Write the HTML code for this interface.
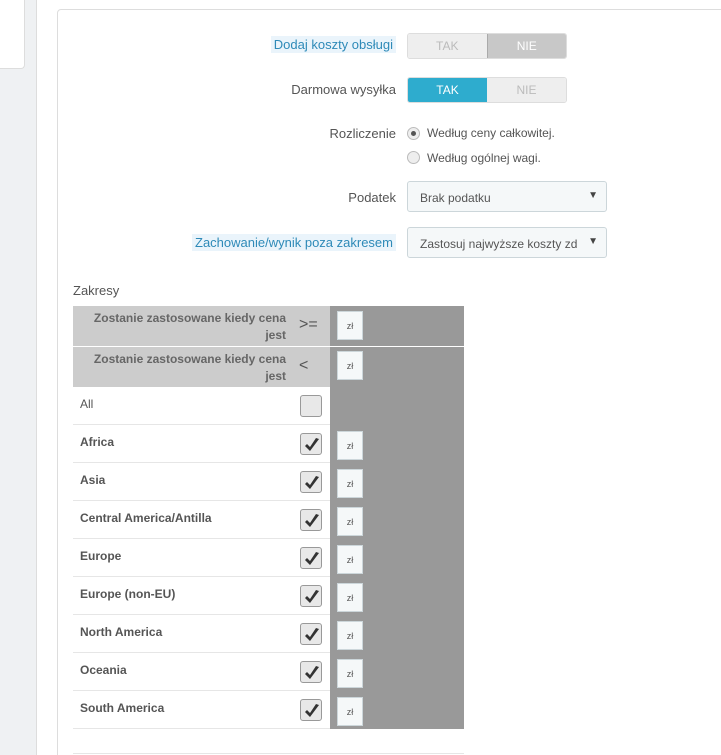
<!DOCTYPE html>
<html><head><meta charset="utf-8"><style>
*{box-sizing:border-box;margin:0;padding:0}
html,body{width:721px;height:755px;overflow:hidden}
body{background:#eff1f3;font-family:"Liberation Sans",sans-serif;font-size:12px;color:#555;position:relative}
.abs{position:absolute}
.lbl{position:absolute;right:325px;font-size:13px;color:#555;white-space:nowrap}
.hl{background:#eaf4fb;color:#2e8ab8;padding:1px 3px}
.sw{position:absolute;left:407px;width:160px;height:26px;border:1px solid #ddd;border-radius:3px;display:flex;font-size:12px;overflow:hidden}
.sw div{flex:1;display:flex;align-items:center;justify-content:center}
.sel{position:absolute;left:407px;width:200px;height:31px;border:1px solid #ccd6da;border-radius:3px;background:#f5f8f9;font-size:12px;color:#555;padding:9px 12px;white-space:nowrap;overflow:hidden}
.sel:after{content:"▼";position:absolute;right:8px;top:8px;font-size:10px;color:#444}
.radio{position:absolute;left:407px;width:13px;height:13px;border:1px solid #bbb;border-radius:50%;background:#eee}
.row{position:absolute;left:73px;width:391px;height:38px;border-bottom:1px solid #e6e6e6;background:#fff}
.row .n{position:absolute;left:7px;top:10px;font-weight:bold;font-size:12px;color:#555}
.row .r{position:absolute;left:257px;top:0;width:134px;height:38px;background:#999}
.cb{position:absolute;left:227px;top:8px;width:22px;height:22px;border:1px solid #999;border-radius:3px;background:#e8e8e8}
.cb svg{position:absolute;left:2px;top:2px}
.zl{position:absolute;left:7px;top:6px;width:26px;height:29px;background:#f5f8f9;border:1px solid #ccd6da;font-size:9px;display:flex;align-items:center;justify-content:center;color:#555}
.hdr{position:absolute;left:73px;width:391px;height:40px;background:#ccc}
.hdr .t{position:absolute;left:10px;top:4px;width:203px;text-align:right;font-weight:bold;font-size:12px;line-height:17px;color:#666}
.hdr .op{position:absolute;left:226px;top:10px;font-size:16px;color:#555}
.hdr .r{position:absolute;left:257px;top:0;width:134px;height:40px;background:#999}
</style></head><body>
<div class="abs" style="left:0;top:0;width:25px;height:69px;background:#fff;border:1px solid #ddd;border-left:none;border-top:none;border-radius:0 0 4px 0"></div>
<div class="abs" style="left:36px;top:0;width:685px;height:755px;background:#fff;border-left:1px solid #ddd"></div>
<div class="abs" style="left:57px;top:9px;width:680px;height:760px;background:#fff;border:1px solid #ddd;border-radius:4px"></div>

<div class="lbl" style="top:37px"><span class="hl">Dodaj koszty obsługi</span></div>
<div class="sw" style="top:33px"><div style="background:#eee;color:#bbb">TAK</div><div style="background:#c8c8c8;color:#fff;border-left:1px solid #aaa">NIE</div></div>

<div class="lbl" style="top:82px">Darmowa wysyłka</div>
<div class="sw" style="top:77px"><div style="background:#2eacce;color:#fff">TAK</div><div style="background:#eee;color:#bbb">NIE</div></div>

<div class="lbl" style="top:126px">Rozliczenie</div>
<div class="radio" style="top:127px"><div style="width:5px;height:5px;border-radius:50%;background:#555;margin:3px"></div></div>
<div class="abs" style="left:427px;top:126px;font-size:12px">Według ceny całkowitej.</div>
<div class="radio" style="top:151px"></div>
<div class="abs" style="left:427px;top:151px;font-size:12px">Według ogólnej wagi.</div>

<div class="lbl" style="top:190px">Podatek</div>
<div class="sel" style="top:181px">Brak podatku</div>

<div class="lbl" style="top:235px"><span class="hl">Zachowanie/wynik poza zakresem</span></div>
<div class="sel" style="top:227px;padding-right:30px">Zastosuj najwyższe koszty zd</div>

<div class="abs" style="left:73px;top:283px;font-size:13px;color:#555">Zakresy</div>

<div class="hdr" style="top:306px"><div class="t">Zostanie zastosowane kiedy cena jest</div><div class="op">&gt;=</div><div class="r"><div class="zl" style="top:5px">zł</div></div></div>
<div class="hdr" style="top:347px"><div class="t">Zostanie zastosowane kiedy cena jest</div><div class="op">&lt;</div><div class="r"><div class="zl" style="top:4px">zł</div></div></div>

<div class="row" style="top:387px"><div class="n" style="font-weight:normal">All</div><div class="cb"></div><div class="r"></div></div>
<div class="row" style="top:425px"><div class="n">Africa</div><div class="cb"><svg width="18" height="18" viewBox="0 0 18 18"><path d="M2 10 L7 15 L16 3 L13 2 L7 11 L4 8 Z" fill="#333"/></svg></div><div class="r"><div class="zl">zł</div></div></div>
<div class="row" style="top:463px"><div class="n">Asia</div><div class="cb"><svg width="18" height="18" viewBox="0 0 18 18"><path d="M2 10 L7 15 L16 3 L13 2 L7 11 L4 8 Z" fill="#333"/></svg></div><div class="r"><div class="zl">zł</div></div></div>
<div class="row" style="top:501px"><div class="n">Central America/Antilla</div><div class="cb"><svg width="18" height="18" viewBox="0 0 18 18"><path d="M2 10 L7 15 L16 3 L13 2 L7 11 L4 8 Z" fill="#333"/></svg></div><div class="r"><div class="zl">zł</div></div></div>
<div class="row" style="top:539px"><div class="n">Europe</div><div class="cb"><svg width="18" height="18" viewBox="0 0 18 18"><path d="M2 10 L7 15 L16 3 L13 2 L7 11 L4 8 Z" fill="#333"/></svg></div><div class="r"><div class="zl">zł</div></div></div>
<div class="row" style="top:577px"><div class="n">Europe (non-EU)</div><div class="cb"><svg width="18" height="18" viewBox="0 0 18 18"><path d="M2 10 L7 15 L16 3 L13 2 L7 11 L4 8 Z" fill="#333"/></svg></div><div class="r"><div class="zl">zł</div></div></div>
<div class="row" style="top:615px"><div class="n">North America</div><div class="cb"><svg width="18" height="18" viewBox="0 0 18 18"><path d="M2 10 L7 15 L16 3 L13 2 L7 11 L4 8 Z" fill="#333"/></svg></div><div class="r"><div class="zl">zł</div></div></div>
<div class="row" style="top:653px"><div class="n">Oceania</div><div class="cb"><svg width="18" height="18" viewBox="0 0 18 18"><path d="M2 10 L7 15 L16 3 L13 2 L7 11 L4 8 Z" fill="#333"/></svg></div><div class="r"><div class="zl">zł</div></div></div>
<div class="row" style="top:691px"><div class="n">South America</div><div class="cb"><svg width="18" height="18" viewBox="0 0 18 18"><path d="M2 10 L7 15 L16 3 L13 2 L7 11 L4 8 Z" fill="#333"/></svg></div><div class="r"><div class="zl">zł</div></div></div>
<div class="abs" style="left:73px;top:753px;width:391px;height:1px;background:#e6e6e6"></div>
</body></html>
